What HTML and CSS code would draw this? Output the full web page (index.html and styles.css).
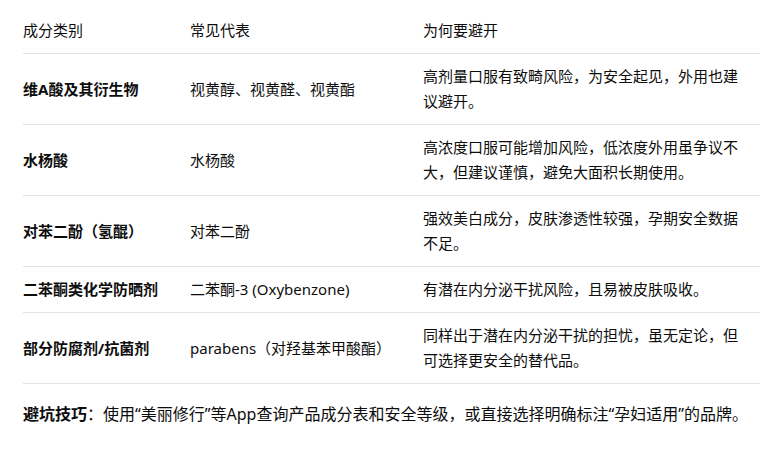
FILE: index.html
```html
<!DOCTYPE html>
<html lang="zh-CN">
<head>
<meta charset="utf-8">
<link rel="stylesheet" href="styles.css">
</head>
<body>
<div class="content">
  <table class="tbl">
    <colgroup>
      <col class="c1"><col class="c2"><col class="c3">
    </colgroup>
    <thead>
      <tr><th>成分类别</th><th>常见代表</th><th>为何要避开</th></tr>
    </thead>
    <tbody>
      <tr><td class="name">维A酸及其衍生物</td><td>视黄醇、视黄醛、视黄酯</td><td>高剂量口服有致畸风险，为安全起见，外用也建议避开。</td></tr>
      <tr><td class="name">水杨酸</td><td>水杨酸</td><td>高浓度口服可能增加风险，低浓度外用虽争议不大，但建议谨慎，避免大面积长期使用。</td></tr>
      <tr><td class="name">对苯二酚（氢醌）</td><td>对苯二酚</td><td>强效美白成分，皮肤渗透性较强，孕期安全数据不足。</td></tr>
      <tr><td class="name">二苯酮类化学防晒剂</td><td>二苯酮-3 (Oxybenzone)</td><td>有潜在内分泌干扰风险，且易被皮肤吸收。</td></tr>
      <tr><td class="name">部分防腐剂/抗菌剂</td><td>parabens（对羟基苯甲酸酯）</td><td>同样出于潜在内分泌干扰的担忧，虽无定论，但可选择更安全的替代品。</td></tr>
    </tbody>
  </table>
  <div class="tip"><strong>避坑技巧</strong>：使用“美丽修行”等App查询产品成分表和安全等级，或直接选择明确标注“孕妇适用”的品牌。</div>
</div>
</body>
</html>
```

FILE: styles.css
```css
html, body {
  margin: 0;
  padding: 0;
  background: #ffffff;
}
body {
  font-family: "Noto Sans", "Noto Sans CJK SC", sans-serif;
  font-size: 15px;
  line-height: 25px;
  color: #0d0d0d;
}
.content {
  width: 737px;
  padding: 8px 0 0 23px;
}
.tbl {
  width: 737px;
  table-layout: fixed;
  border-collapse: collapse;
  margin: 0;
}
.c1 { width: 159px; }
.c2 { width: 233px; }
.c3 { width: 345px; }
.tbl th,
.tbl td {
  padding: 10px 8px;
  text-align: left;
  vertical-align: middle;
  font-weight: 400;
  border-bottom: 1px solid #e3e3e3;
}
.tbl th:first-child,
.tbl td:first-child {
  padding-left: 0;
}
.tbl td.name {
  font-weight: 700;
}
.tip {
  margin-top: 17px;
  font-size: 16px;
  line-height: 26px;
  white-space: nowrap;
}
.tip strong {
  font-weight: 700;
}
```
